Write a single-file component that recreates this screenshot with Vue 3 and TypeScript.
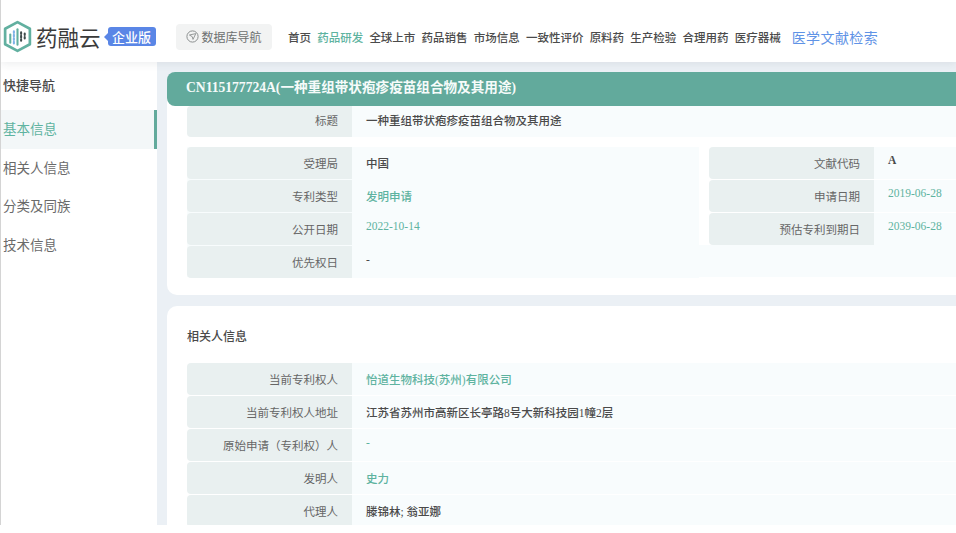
<script setup lang="ts">
type Tone = 'plain' | 'link' | 'muted'
interface Row { label: string; value: string; tone: Tone; raised?: boolean }
const navItems: string[] = ['全球上市', '药品销售', '市场信息', '一致性评价', '原料药', '生产检验', '合理用药', '医疗器械']
const sideItems: string[] = ['相关人信息', '分类及同族', '技术信息']
const leftRows: Row[] = [
  { label: '受理局', value: '中国', tone: 'plain' },
  { label: '专利类型', value: '发明申请', tone: 'link' },
  { label: '公开日期', value: '2022-10-14', tone: 'link', raised: true },
  { label: '优先权日', value: '-', tone: 'plain', raised: true }
]
const rightRows: Row[] = [
  { label: '文献代码', value: 'A', tone: 'plain', raised: true },
  { label: '申请日期', value: '2019-06-28', tone: 'link', raised: true },
  { label: '预估专利到期日', value: '2039-06-28', tone: 'link', raised: true }
]
const people: Row[] = [
  { label: '当前专利权人', value: '怡道生物科技(苏州)有限公司', tone: 'link' },
  { label: '当前专利权人地址', value: '江苏省苏州市高新区长亭路8号大新科技园1幢2层', tone: 'plain' },
  { label: '原始申请（专利权）人', value: '-', tone: 'link', raised: true },
  { label: '发明人', value: '史力', tone: 'link' },
  { label: '代理人', value: '滕锦林; 翁亚娜', tone: 'plain' }
]
</script>

<template>
  <div class="page">
    <header class="top">
      <div class="logo">
        <svg class="mark" width="29" height="33" viewBox="0 0 28 32" fill="none">
          <path d="M14 2 L26 8.5 V23.5 L14 30 L2 23.5 V8.5 Z" stroke="#62b0a0" stroke-width="2.6" stroke-linejoin="round" />
          <g stroke-width="2" stroke-linecap="round">
            <path d="M7 14v8" stroke="#62b0a0" />
            <path d="M10.5 11v12" stroke="#7fb2e8" stroke-dasharray="1.6 1.8" />
            <path d="M14 9v15" stroke="#62b0a0" />
            <path d="M17.5 12v8" stroke="#3d4a4a" stroke-dasharray="1.6 1.8" />
            <path d="M21 13v6" stroke="#3d4a4a" stroke-dasharray="1.6 1.8" />
          </g>
        </svg>
        <span class="brand">药融云</span>
        <span class="badge">企业版</span>
      </div>
      <div class="db-nav">
        <svg width="13" height="13" viewBox="0 0 13 13" fill="none">
          <circle cx="6.5" cy="6.5" r="5.6" stroke="#8b8f8f" stroke-width="1" />
          <path d="M3.4 5 L9.8 3.6 L7 9.4 L6.2 6.6 Z" stroke="#8b8f8f" stroke-width="0.9" stroke-linejoin="round" />
        </svg>
        <span>数据库导航</span>
      </div>
      <nav class="nav">
        <span>首页</span>
        <span class="active">药品研发</span>
        <span v-for="item in navItems" :key="item">{{ item }}</span>
      </nav>
      <span class="search">医学文献检索</span>
    </header>

    <div class="body">
      <aside class="side">
        <div class="side-title">快捷导航</div>
        <div class="side-item current">基本信息</div>
        <div v-for="item in sideItems" :key="item" class="side-item">{{ item }}</div>
      </aside>

      <main class="main">
        <section class="card first">
          <h1 class="banner">CN115177724A(一种重组带状疱疹疫苗组合物及其用途)</h1>
          <div class="row title-row">
            <div class="label">标题</div>
            <div class="value">一种重组带状疱疹疫苗组合物及其用途</div>
          </div>
          <div class="columns">
            <div class="col left">
              <div v-for="r in leftRows" :key="r.label" class="row">
                <div class="label">{{ r.label }}</div>
                <div class="value" :class="[r.tone, { raised: r.raised }]">{{ r.value }}</div>
              </div>
            </div>
            <div class="col right">
              <div v-for="r in rightRows" :key="r.label" class="row">
                <div class="label">{{ r.label }}</div>
                <div class="value" :class="[r.tone, { raised: r.raised }]">{{ r.value }}</div>
              </div>
            </div>
          </div>
        </section>

        <section class="card second">
          <h2 class="heading">相关人信息</h2>
          <div class="people">
            <div v-for="r in people" :key="r.label" class="row">
              <div class="label">{{ r.label }}</div>
              <div class="value" :class="[r.tone, { raised: r.raised }]">{{ r.value }}</div>
            </div>
          </div>
        </section>
      </main>
    </div>
  </div>
</template>

<style>
html, body { margin: 0; background: #fff; overflow: hidden; }
</style>

<style scoped>
.page {
  width: 956px;
  height: 525px;
  display: flex;
  flex-direction: column;
  overflow: hidden;
  box-sizing: border-box;
  border-left: 1px solid #d4d4d4;
  font-family: "Liberation Serif", "Noto Sans CJK SC", serif;
  color: #4a4a4a;
  background: #fff;
}
.top {
  position: relative;
  z-index: 1;
  height: 62px;
  flex: none;
  display: flex;
  align-items: center;
  background: #fff;
  padding: 11px 0 0 2px;
  box-sizing: border-box;
  box-shadow: 0 2px 8px rgba(60, 70, 80, 0.09);
}
.logo { display: flex; align-items: center; width: 173px; flex: none; }
.mark { flex: none; }
.brand {
  font: 400 21.5px/1 "Noto Sans CJK SC", sans-serif;
  color: #3a3a3a;
  margin-left: 4px;
  white-space: nowrap;
  flex: none;
}
.badge {
  position: relative;
  background: #5a86e6;
  color: #fff;
  font: 500 13px/19px "Noto Sans CJK SC", sans-serif;
  border-radius: 3px;
  text-align: center;
  margin-left: 7px;
  flex: none;
  width: 48px;
}
.badge::before {
  content: "";
  position: absolute;
  left: -4px;
  top: 6px;
  border-style: solid;
  border-width: 4px 4px 4px 0;
  border-color: transparent #5a86e6 transparent transparent;
}
.db-nav {
  width: 96px;
  height: 26px;
  display: flex;
  align-items: center;
  justify-content: center;
  gap: 2px;
  background: #f2f3f3;
  border-radius: 4px;
  font: 400 12px "Noto Sans CJK SC", sans-serif;
  color: #6d7070;
  flex: none;
}
.nav {
  margin-left: 16px;
  display: flex;
  gap: 6.2px;
  font: 500 11.5px "Noto Sans CJK SC", sans-serif;
  color: #4b4b4b;
  white-space: nowrap;
}
.nav .active { color: #5eb3a0; }
.search {
  margin-left: 11px;
  font: 400 14px "Noto Sans CJK SC", sans-serif;
  letter-spacing: 0.4px;
  color: #5f93e6;
  white-space: nowrap;
}
.body { flex: 1; display: flex; min-height: 0; }
.side {
  width: 156px;
  flex: none;
  background: #fff;
  font-family: "Noto Sans CJK SC", sans-serif;
}
.side-title {
  height: 48px;
  padding: 13px 0 0 2px;
  box-sizing: border-box;
  font-size: 13px;
  font-weight: 500;
  line-height: 20px;
  color: #4a4a4a;
}
.side-item {
  height: 38.7px;
  line-height: 37px;
  padding-left: 2px;
  font-size: 13.5px;
  color: #6a6a6a;
}
.side-item.current {
  background: #f3f7f8;
  color: #5eb3a0;
  border-right: 3px solid #62aa9c;
}
.main {
  flex: 1;
  min-width: 0;
  background: #ebf0f5;
  padding: 10px 0 0 10px;
}
.card { background: #fff; border-radius: 10px 0 0 10px; }
.first { height: 223px; padding-left: 20px; }
.banner {
  margin: 0 0 0 -20px;
  height: 34px;
  line-height: 32px;
  padding-left: 19px;
  background: #62aa9c;
  color: #f6fbfa;
  font-size: 13.6px;
  font-weight: 700;
  border-radius: 8px 0 0 8px;
}
.row { display: flex; font-size: 11.5px; }
.label {
  width: 165px;
  flex: none;
  box-sizing: border-box;
  padding-right: 14px;
  text-align: right;
  background: #e9f0f0;
  color: #666;
  border-radius: 4px 0 0 4px;
}
.value {
  flex: 1;
  min-width: 0;
  padding-left: 14px;
  color: #4a4a4a;
  background: #f8fcfd;
  font-weight: 500;
}
.value.link { color: #5eb3a0; }
.title-row { height: 31px; line-height: 31px; margin-bottom: 10px; }
.columns { display: flex; height: 130px; background: #f8fcfd; }
.col { display: flex; flex-direction: column; gap: 1.5px; }
.left { width: 512px; flex: none; }
.right { flex: 1; background: #fff; padding-left: 10px; align-self: flex-start; }
.row { --row-line: 34px; }
.columns .row { height: 31.5px; line-height: var(--row-line); }
.value.raised { line-height: 26px; }
.right .value.plain { font-weight: 700; }
.second { margin-top: 11px; padding: 21px 0 0 20px; height: 240px; border-radius: 10px 0 0 0; }
.heading {
  margin: 0 0 15px;
  font-size: 12px;
  font-weight: 500;
  line-height: 21px;
  color: #4a4a4a;
}
.people { display: flex; flex-direction: column; gap: 1.5px; }
.people .row { height: 31.5px; line-height: var(--row-line); }
</style>
